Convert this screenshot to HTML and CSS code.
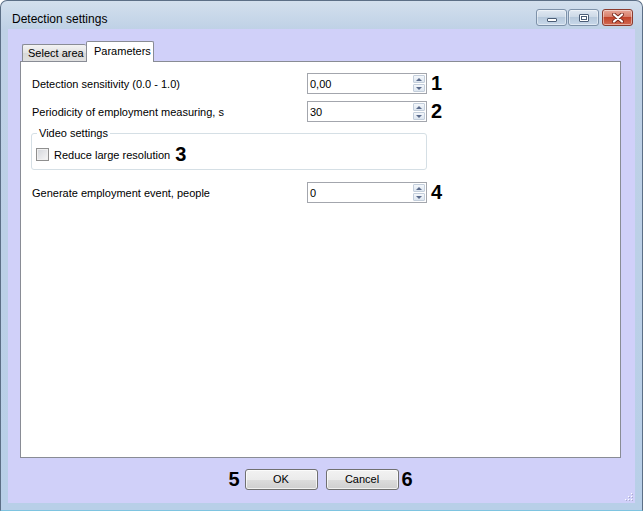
FILE: index.html
```html
<!DOCTYPE html>
<html>
<head>
  <meta charset="utf-8">
  <title>Detection settings</title>
  <link rel="stylesheet" href="styles.css">
</head>
<body>
  <div class="window">
    <div class="titlebar">
      <div class="title">Detection settings</div>
      <div class="caption-btns">
        <div class="cbtn min"><span class="glyph-min"></span></div>
        <div class="cbtn max"><span class="glyph-max"></span></div>
        <div class="cbtn close">
          <svg width="12" height="10" viewBox="0 0 12 10">
            <path d="M2 1.5 L10 8.5 M10 1.5 L2 8.5" stroke="#7a2a1e" stroke-width="4" stroke-linecap="round"/>
            <path d="M2 1.5 L10 8.5 M10 1.5 L2 8.5" stroke="#fff" stroke-width="2.2" stroke-linecap="round"/>
          </svg>
        </div>
      </div>
    </div>
    <div class="client">
      <div class="tabs">
        <div class="tab">Select area</div>
        <div class="tab active">Parameters</div>
      </div>
      <div class="panel">
        <div class="row">
          <label>Detection sensitivity (0.0 - 1.0)</label>
          <div class="spin"><span class="value">0,00</span><span class="arrows"><i class="up"></i><i class="down"></i></span></div>
          <b class="mark">1</b>
        </div>
        <div class="row">
          <label>Periodicity of employment measuring, s</label>
          <div class="spin"><span class="value">30</span><span class="arrows"><i class="up"></i><i class="down"></i></span></div>
          <b class="mark">2</b>
        </div>
        <fieldset class="group">
          <legend>Video settings</legend>
          <div class="check-row">
            <span class="checkbox"></span>
            <span>Reduce large resolution</span>
            <b class="mark">3</b>
          </div>
        </fieldset>
        <div class="row after-group">
          <label>Generate employment event, people</label>
          <div class="spin"><span class="value">0</span><span class="arrows"><i class="up"></i><i class="down"></i></span></div>
          <b class="mark">4</b>
        </div>
      </div>
      <div class="footer">
        <b class="mark">5</b>
        <div class="btn ok">OK</div>
        <div class="btn cancel">Cancel</div>
        <b class="mark">6</b>
      </div>
      <svg class="grip" width="8" height="8" viewBox="0 0 8 8">
        <rect x="6" y="0" width="1" height="1" fill="#fff"/>
        <rect x="3" y="3" width="1" height="1" fill="#fff"/>
        <rect x="6" y="3" width="1" height="1" fill="#fff"/>
        <rect x="0" y="6" width="1" height="1" fill="#fff"/>
        <rect x="3" y="6" width="1" height="1" fill="#fff"/>
        <rect x="6" y="6" width="1" height="1" fill="#fff"/>
        <rect x="7" y="1" width="1" height="1" fill="#a9a9c9"/>
        <rect x="4" y="4" width="1" height="1" fill="#a9a9c9"/>
        <rect x="7" y="4" width="1" height="1" fill="#a9a9c9"/>
        <rect x="1" y="7" width="1" height="1" fill="#a9a9c9"/>
        <rect x="4" y="7" width="1" height="1" fill="#a9a9c9"/>
        <rect x="7" y="7" width="1" height="1" fill="#a9a9c9"/>
      </svg>
    </div>
  </div>
</body>
</html>
```

FILE: styles.css
```css
html,
body {
  margin: 0;
  padding: 0;
  width: 643px;
  height: 511px;
  overflow: hidden;
}
body {
  font-family: "Liberation Sans", Arial, sans-serif;
  font-size: 11px;
  color: #000;
  background: #fff;
}

.window {
  box-sizing: border-box;
  width: 643px;
  height: 511px;
  border: 1px solid #5c6f86;
  border-bottom-color: #7ec4e0;
  border-radius: 7px 7px 0 0;
  background: linear-gradient(#d3dfed 0, #bfd1e6 28px, #b8cfe8 100%);
  display: flex;
  flex-direction: column;
}

/* title bar */
.titlebar {
  height: 28px;
  display: flex;
  align-items: flex-start;
  padding: 0 9px 0 11px;
  flex-shrink: 0;
}
.title {
  font-size: 12px;
  line-height: 14px;
  padding-top: 11px;
  color: #000;
  flex: 1;
}
.caption-btns {
  display: flex;
  margin-top: 8px;
}
.cbtn {
  box-sizing: border-box;
  height: 17px;
  width: 31px;
  border: 1px solid #7d91a9;
  border-radius: 3px;
  background: linear-gradient(#e0e8f2 0, #cbd8e6 50%, #b7c9dc 50%, #c8d8ea 100%);
  box-shadow: inset 0 0 0 1px rgba(255,255,255,.45);
  display: flex;
  align-items: center;
  justify-content: center;
  margin-left: 1px;
}
.cbtn.close {
  width: 31px;
  margin-left: 3px;
  border-color: #8b3b2e;
  background: linear-gradient(#e8a697 0, #d67a66 50%, #c2432a 50%, #d26a52 100%);
}
.glyph-min {
  box-sizing: border-box;
  width: 10px;
  height: 4px;
  margin-top: 5px;
  border: 1px solid #4b5d76;
  border-radius: 1px;
  background: #fff;
}
.glyph-max {
  box-sizing: border-box;
  width: 10px;
  height: 8px;
  border: 1px solid #4b5d76;
  border-radius: 1px;
  background: #fff;
  box-shadow: inset 0 0 0 1px #fff, inset 0 0 0 2px #4b5d76;
}

/* client area */
.client {
  flex: 1;
  margin: 0 7px 7px 7px;
  background: #d0d0f9;
  padding: 12px 14px 0 12px;
  display: flex;
  flex-direction: column;
  position: relative;
}

.tabs {
  height: 20px;
  display: flex;
  align-items: flex-end;
  padding-left: 2px;
}
.tab {
  box-sizing: border-box;
  height: 17px;
  width: 64px;
  border: 1px solid #898c95;
  border-bottom: 0;
  border-right: 0;
  border-radius: 2px 2px 0 0;
  background: linear-gradient(#f3f3f3, #e2e2e2 50%, #d8d8d8 50%, #e0e0e0);
  padding-left: 5px;
  line-height: 17px;
  white-space: nowrap;
}
.tab.active {
  height: 21px;
  width: 68px;
  margin-bottom: -1px;
  border-right: 1px solid #898c95;
  background: #fff;
  line-height: 18px;
  padding-left: 7px;
  position: relative;
  z-index: 1;
}

.panel {
  flex: 1;
  background: #fff;
  border: 1px solid #898c95;
  padding: 11px 0 0 11px;
}

.row {
  display: flex;
  align-items: center;
  height: 21px;
  margin-bottom: 7px;
}
.row label {
  width: 275px;
  flex-shrink: 0;
}
.row.after-group {
  margin-top: 12px;
}

.spin {
  box-sizing: border-box;
  width: 120px;
  height: 21px;
  border: 1px solid #a3a6ad;
  display: flex;
  align-items: center;
  background: #fff;
}
.spin .value {
  flex: 1;
  padding-left: 2px;
}
.arrows {
  display: flex;
  flex-direction: column;
  gap: 1px;
  margin: 1px 1px 1px 0;
  align-self: stretch;
}
.arrows i {
  box-sizing: border-box;
  width: 12px;
  flex: 1;
  border: 1px solid #c3cedb;
  border-radius: 1px;
  background: linear-gradient(#f4f7fb, #dde6f0);
  display: flex;
  align-items: center;
  justify-content: center;
}
.arrows i::after {
  content: "";
  border-left: 3px solid transparent;
  border-right: 3px solid transparent;
}
.arrows .up::after {
  border-bottom: 3px solid #5a6b8c;
}
.arrows .down::after {
  border-top: 3px solid #5a6b8c;
}

.mark {
  font-size: 20px;
  font-weight: bold;
  line-height: 21px;
  margin-left: 4px;
}

.group {
  box-sizing: border-box;
  width: 396px;
  margin: -2px 0 0 -1px;
  padding: 4px 4px 4px 4px;
  border: 1px solid #d5dfe5;
  border-radius: 3px;
  min-width: 0;
}
.group legend {
  padding: 0 2px;
  margin-left: 1px;
  line-height: 13px;
}
.check-row {
  display: flex;
  align-items: center;
  height: 21px;
}
.checkbox {
  box-sizing: border-box;
  width: 13px;
  height: 13px;
  border: 1px solid #8f8f8f;
  background: linear-gradient(135deg, #d3d6db, #f7f7f7);
  box-shadow: inset 0 0 0 1px #f0f0f0;
  margin-right: 5px;
}
.check-row .mark {
  margin-left: 5px;
}

/* footer */
.footer {
  height: 45px;
  display: flex;
  align-items: flex-start;
  justify-content: center;
  padding-top: 11px;
  box-sizing: border-box;
}
.footer .mark {
  margin: 0;
}
.btn {
  box-sizing: border-box;
  width: 73px;
  height: 21px;
  border: 1px solid #707070;
  border-radius: 3px;
  background: linear-gradient(#f2f2f2 0, #ebebeb 50%, #dddddd 50%, #cfcfcf 100%);
  box-shadow: inset 0 0 0 1px rgba(255,255,255,.7);
  text-align: center;
  line-height: 19px;
}
.btn.ok {
  margin-left: 5px;
}
.btn.cancel {
  margin-left: 8px;
  margin-right: 3px;
}

.grip {
  position: absolute;
  right: 2px;
  bottom: 2px;
}
```
